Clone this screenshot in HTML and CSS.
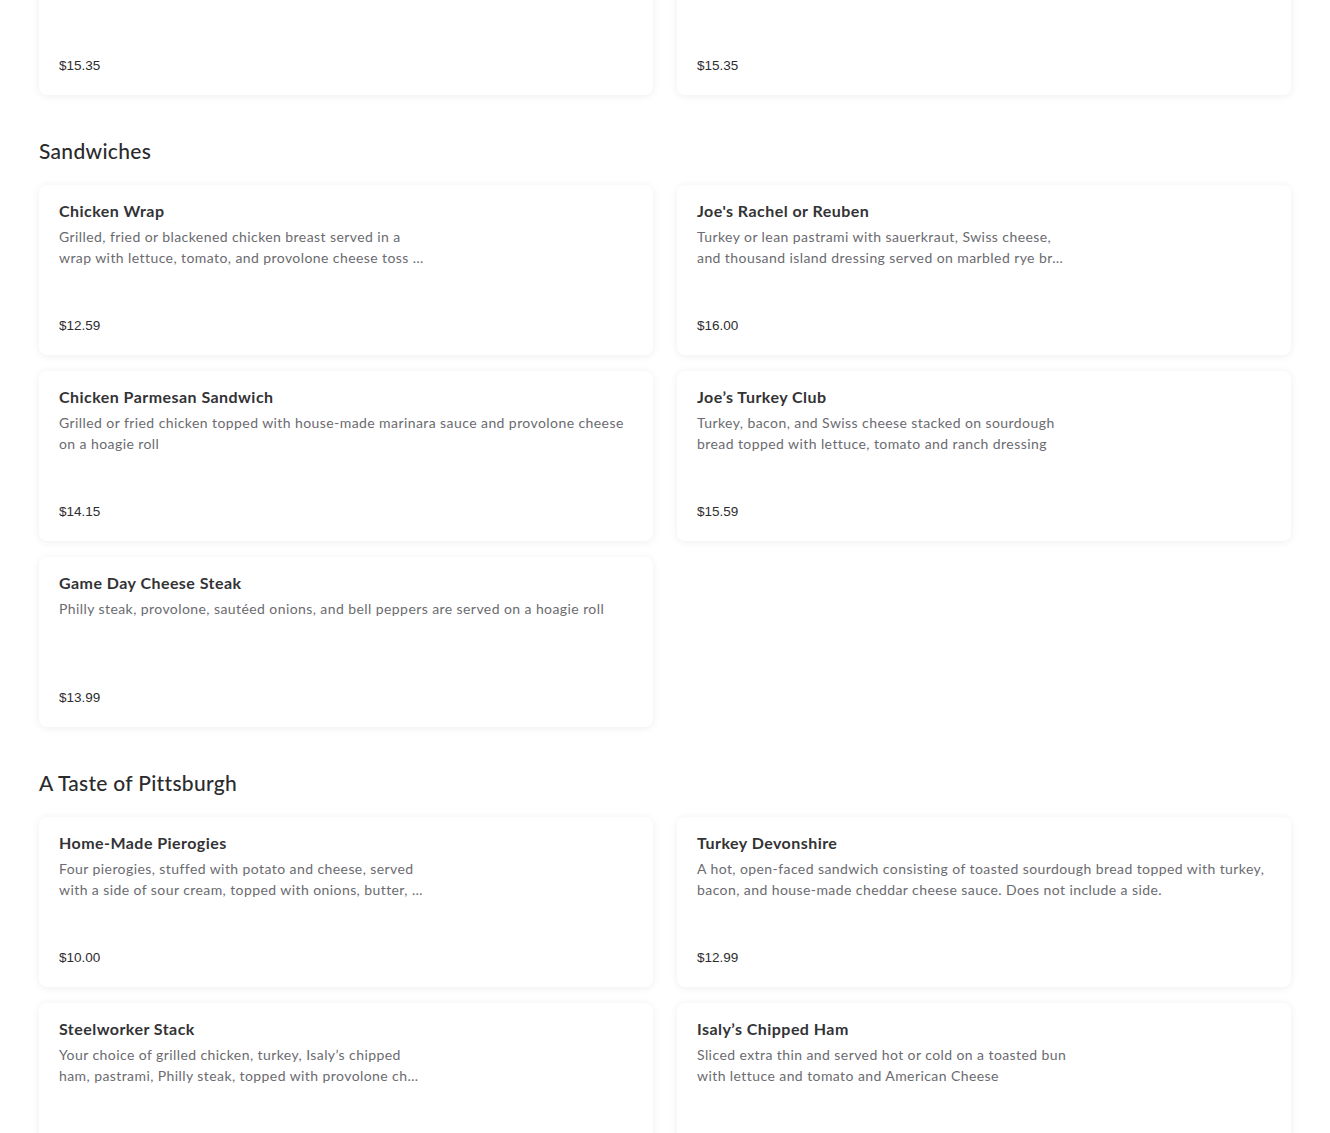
FILE: index.html
```html
<!DOCTYPE html>
<html lang="en">
<head>
<meta charset="utf-8">
<title>Menu</title>
<link rel="stylesheet" href="styles.css">
</head>
<body>
<main class="menu">
  <section class="section section-first">
    <div class="grid">
      <article class="card">
        <div class="price">$15.35</div>
      </article>
      <article class="card">
        <div class="price">$15.35</div>
      </article>
    </div>
  </section>

  <section class="section">
    <h2 class="section-title">Sandwiches</h2>
    <div class="grid">
      <article class="card">
        <div class="card-text narrow">
          <h3 class="item-name">Chicken Wrap</h3>
          <p class="item-desc">Grilled, fried or blackened chicken breast served in a wrap with lettuce, tomato, and provolone cheese toss …</p>
        </div>
        <div class="price">$12.59</div>
      </article>
      <article class="card">
        <div class="card-text narrow">
          <h3 class="item-name">Joe's Rachel or Reuben</h3>
          <p class="item-desc">Turkey or lean pastrami with sauerkraut, Swiss cheese, and thousand island dressing served on marbled rye br…</p>
        </div>
        <div class="price">$16.00</div>
      </article>
      <article class="card">
        <div class="card-text">
          <h3 class="item-name">Chicken Parmesan Sandwich</h3>
          <p class="item-desc">Grilled or fried chicken topped with house-made marinara sauce and provolone cheese on a hoagie roll</p>
        </div>
        <div class="price">$14.15</div>
      </article>
      <article class="card">
        <div class="card-text narrow">
          <h3 class="item-name">Joe’s Turkey Club</h3>
          <p class="item-desc">Turkey, bacon, and Swiss cheese stacked on sourdough bread topped with lettuce, tomato and ranch dressing</p>
        </div>
        <div class="price">$15.59</div>
      </article>
      <article class="card">
        <div class="card-text">
          <h3 class="item-name">Game Day Cheese Steak</h3>
          <p class="item-desc">Philly steak, provolone, sautéed onions, and bell peppers are served on a hoagie roll</p>
        </div>
        <div class="price">$13.99</div>
      </article>
    </div>
  </section>

  <section class="section">
    <h2 class="section-title">A Taste of Pittsburgh</h2>
    <div class="grid">
      <article class="card">
        <div class="card-text narrow">
          <h3 class="item-name">Home-Made Pierogies</h3>
          <p class="item-desc">Four pierogies, stuffed with potato and cheese, served with a side of sour cream, topped with onions, butter, …</p>
        </div>
        <div class="price">$10.00</div>
      </article>
      <article class="card">
        <div class="card-text">
          <h3 class="item-name">Turkey Devonshire</h3>
          <p class="item-desc">A hot, open-faced sandwich consisting of toasted sourdough bread topped with turkey, bacon, and house-made cheddar cheese sauce. Does not include a side.</p>
        </div>
        <div class="price">$12.99</div>
      </article>
      <article class="card">
        <div class="card-text narrow">
          <h3 class="item-name">Steelworker Stack</h3>
          <p class="item-desc">Your choice of grilled chicken, turkey, Isaly’s chipped ham, pastrami, Philly steak, topped with provolone ch…</p>
        </div>
      </article>
      <article class="card">
        <div class="card-text narrow">
          <h3 class="item-name">Isaly’s Chipped Ham</h3>
          <p class="item-desc">Sliced extra thin and served hot or cold on a toasted bun with lettuce and tomato and American Cheese</p>
        </div>
      </article>
    </div>
  </section>
</main>
</body>
</html>
```

FILE: styles.css
```css
* {
  box-sizing: border-box;
}

html, body {
  margin: 0;
  padding: 0;
  background: #ffffff;
  overflow: hidden;
}

body {
  font-family: "Lato", "Noto Sans", sans-serif;
  color: #2d2d30;
}

.menu {
  width: 1252px;
  margin: -75px 0 0 39px;
}

.section {
  margin-top: 42px;
}

.section-first {
  margin-top: 0;
}

.section-title {
  margin: 0 0 20px;
  font-size: 21px;
  line-height: 28px;
  font-weight: 500;
  letter-spacing: 0.3px;
  color: #2b2b2e;
}

.grid {
  display: grid;
  grid-template-columns: 614px 614px;
  column-gap: 24px;
  row-gap: 16px;
}

.card {
  height: 170px;
  padding: 15px 20px 20px;
  background: #ffffff;
  border-radius: 8px;
  box-shadow: 0 1px 8px rgba(0, 0, 0, 0.07);
  display: flex;
  flex-direction: column;
}

.card-text {
  width: 100%;
}

.card-text.narrow {
  width: 373px;
}

.item-name {
  margin: 0;
  font-size: 16px;
  line-height: 22px;
  font-weight: 700;
  letter-spacing: 0.45px;
  color: #333336;
}

.item-desc {
  margin: 4px 0 0;
  font-size: 14px;
  line-height: 21px;
  letter-spacing: 0.42px;
  color: #6b6b70;
}

.price {
  margin-top: auto;
  font-family: "Liberation Sans", Arial, sans-serif;
  font-size: 13.5px;
  line-height: 18px;
  color: #2d2d30;
}
```
